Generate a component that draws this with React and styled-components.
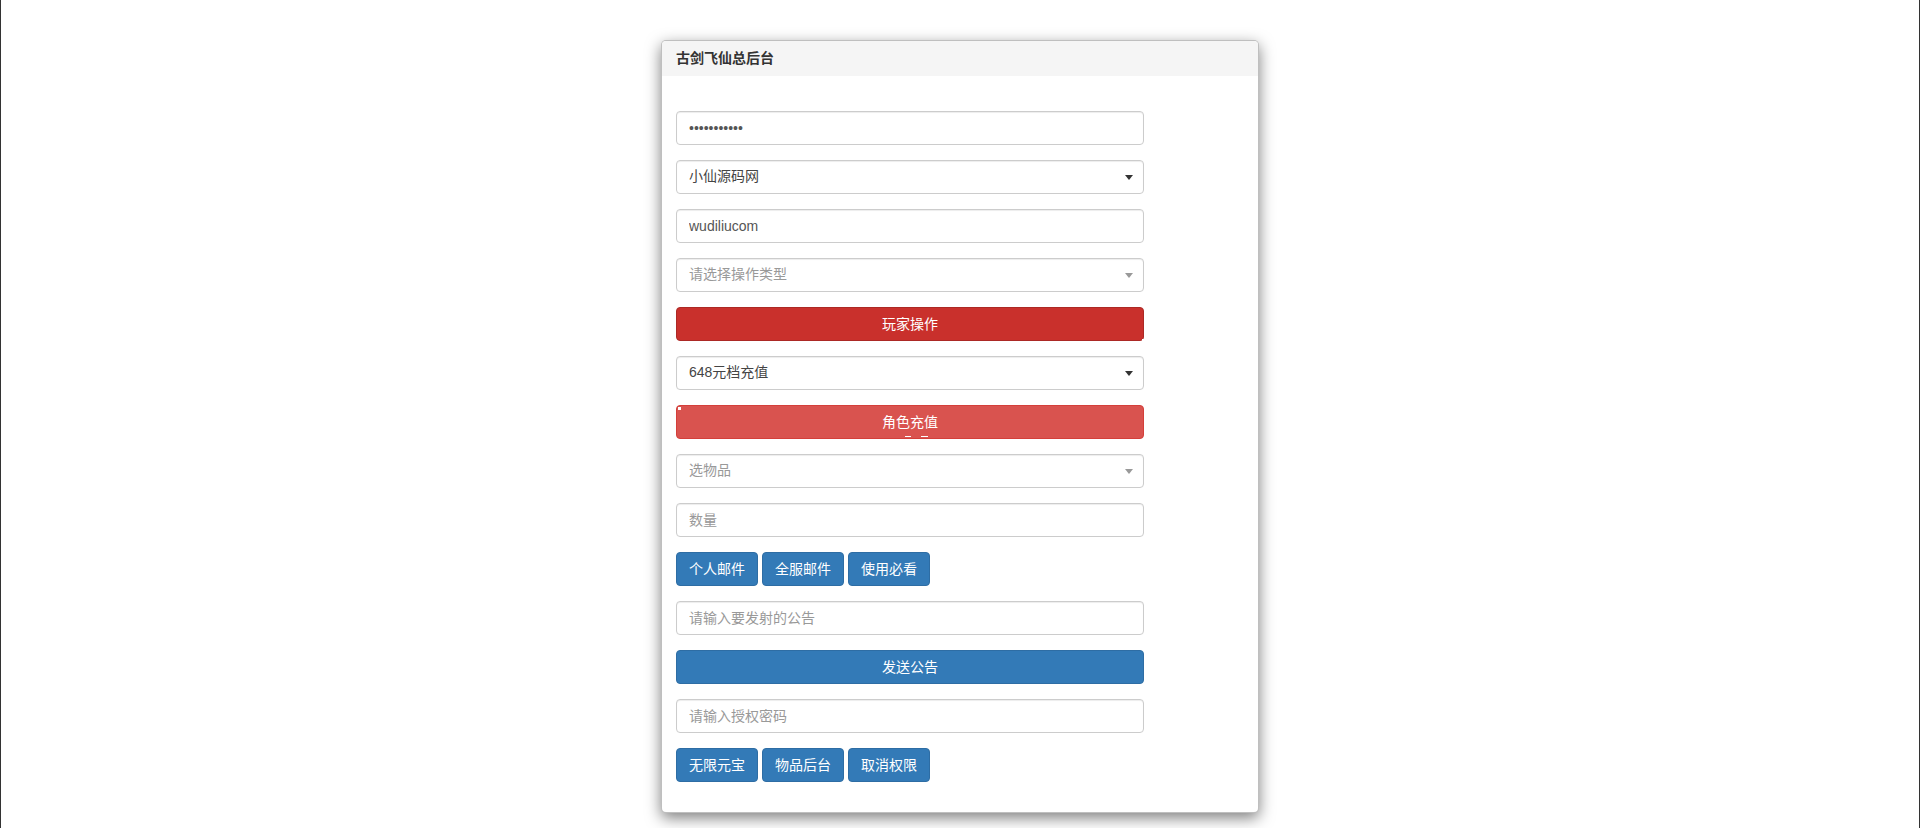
import React from "react";
import styled, { createGlobalStyle } from "styled-components";

const GlobalStyle = createGlobalStyle`
  html, body {
    margin: 0;
    padding: 0;
    background: #fff;
  }
  body {
    font-family: "Liberation Sans", "Noto Sans CJK SC", sans-serif;
    font-size: 14px;
    line-height: 1.42857;
    color: #333;
  }
  * {
    box-sizing: border-box;
  }
`;

const Page = styled.div`
  min-height: 828px;
  border-left: 1px solid #333;
  border-right: 1px solid #333;
  display: flex;
  justify-content: center;
  align-items: flex-start;
  padding-top: 40px;
`;

const Modal = styled.div`
  width: 598px;
  background: #fff;
  border: 1px solid rgba(0, 0, 0, 0.25);
  border-radius: 5px;
  box-shadow: 0 5px 15px rgba(0, 0, 0, 0.5);
  overflow: hidden;
`;

const Header = styled.div`
  height: 35px;
  background: #f5f5f5;
  padding: 0 14px;
  display: flex;
  align-items: center;
  font-weight: bold;
  font-size: 14px;
  color: #333;
`;

const Body = styled.div`
  padding: 35px 14px 30px;
`;

const Form = styled.div`
  width: 468px;
  display: flex;
  flex-direction: column;
  gap: 15px;
`;

const Input = styled.input`
  display: block;
  width: 100%;
  height: 34px;
  padding: 6px 12px;
  font-family: inherit;
  font-size: 14px;
  color: #555;
  background: #fff;
  border: 1px solid #ccc;
  border-radius: 4px;
  box-shadow: inset 0 1px 1px rgba(0, 0, 0, 0.075);
  outline: none;
  &::placeholder {
    color: #999;
  }
`;

const Select = styled.div`
  height: 34px;
  padding: 0 10px 0 12px;
  display: flex;
  align-items: center;
  justify-content: space-between;
  font-size: 14px;
  color: ${(p) => (p.$placeholder ? "#999" : "#444")};
  border: 1px solid #ccc;
  border-radius: 4px;
  box-shadow: inset 0 1px 1px rgba(0, 0, 0, 0.075);
`;

const Caret = styled.span`
  width: 0;
  height: 0;
  border-left: 4px solid transparent;
  border-right: 4px solid transparent;
  border-top: 5px solid ${(p) => (p.$muted ? "#999" : "#333")};
`;

const colors = {
  dangerDark: { bg: "#c9302c", border: "#ac2925" },
  danger: { bg: "#d9534f", border: "#d43f3a" },
  primary: { bg: "#337ab7", border: "#2e6da4" },
};

const Button = styled.button`
  position: relative;
  height: 34px;
  padding: 6px 12px;
  font-family: inherit;
  font-size: 14px;
  line-height: 20px;
  color: #fff;
  background: ${(p) => colors[p.$variant].bg};
  border: 1px solid ${(p) => colors[p.$variant].border};
  border-radius: 4px;
  cursor: pointer;
  width: ${(p) => (p.$block ? "100%" : "auto")};
`;

const Mark = styled.span`
  position: absolute;
  background: #fff;
`;

const ButtonRow = styled.div`
  display: flex;
  gap: 4px;
`;

const SmallButton = styled(Button)`
  width: 82px;
  padding: 6px 0;
`;

export default function App() {
  return (
    <>
      <GlobalStyle />
      <Page>
        <Modal>
          <Header>古剑飞仙总后台</Header>
          <Body>
            <Form>
              <Input type="password" readOnly value="12345678901" />
              <Select>
                <span>小仙源码网</span>
                <Caret />
              </Select>
              <Input readOnly value="wudiliucom" />
              <Select $placeholder>
                <span>请选择操作类型</span>
                <Caret $muted />
              </Select>
              <Button $variant="dangerDark" $block>
                玩家操作
                <Mark style={{ right: -1, bottom: -1, width: 2, height: 2 }} />
              </Button>
              <Select>
                <span>648元档充值</span>
                <Caret />
              </Select>
              <Button $variant="danger" $block>
                角色充值
                <Mark style={{ left: 1, top: 1, width: 3, height: 3 }} />
                <Mark style={{ left: 228, bottom: 1, width: 6, height: 1 }} />
                <Mark style={{ left: 244, bottom: 1, width: 7, height: 1 }} />
              </Button>
              <Select $placeholder>
                <span>选物品</span>
                <Caret $muted />
              </Select>
              <Input placeholder="数量" />
              <ButtonRow>
                <SmallButton $variant="primary">个人邮件</SmallButton>
                <SmallButton $variant="primary">全服邮件</SmallButton>
                <SmallButton $variant="primary">使用必看</SmallButton>
              </ButtonRow>
              <Input placeholder="请输入要发射的公告" />
              <Button $variant="primary" $block>
                发送公告
              </Button>
              <Input placeholder="请输入授权密码" />
              <ButtonRow>
                <SmallButton $variant="primary">无限元宝</SmallButton>
                <SmallButton $variant="primary">物品后台</SmallButton>
                <SmallButton $variant="primary">取消权限</SmallButton>
              </ButtonRow>
            </Form>
          </Body>
        </Modal>
      </Page>
    </>
  );
}
